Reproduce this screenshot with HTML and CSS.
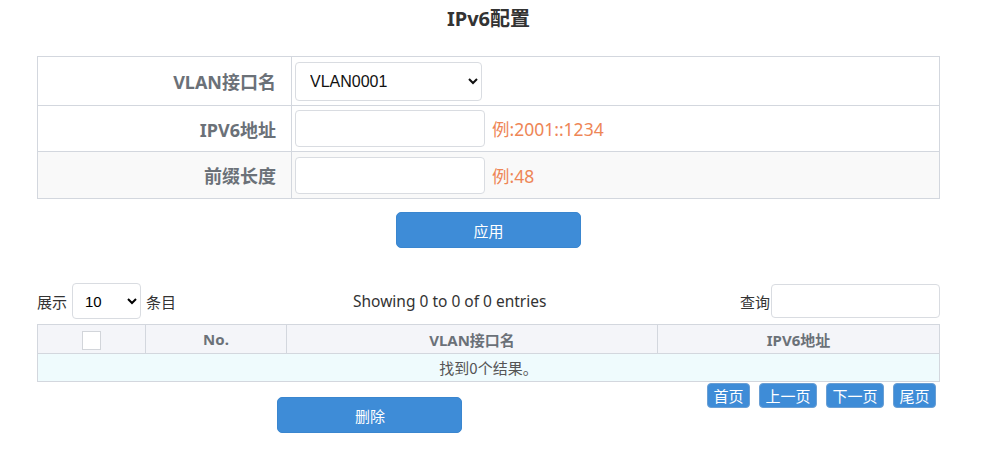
FILE: index.html
```html
<!DOCTYPE html>
<html>
<head>
  <meta charset="UTF-8">
  <title>IPv6配置</title>
  <link rel="stylesheet" href="styles.css">
</head>
<body>
  <div class="page">
    <h1>IPv6配置</h1>

    <table class="form-table">
      <tr class="row1">
        <td class="label">VLAN接口名</td>
        <td>
          <select class="vlan-select">
            <option>VLAN0001</option>
          </select>
        </td>
      </tr>
      <tr class="row2">
        <td class="label">IPV6地址</td>
        <td><input type="text" class="field"><span class="hint">例:2001::1234</span></td>
      </tr>
      <tr class="row3 alt">
        <td class="label">前缀长度</td>
        <td><input type="text" class="field"><span class="hint">例:48</span></td>
      </tr>
    </table>

    <div class="apply-row">
      <button class="btn btn-wide">应用</button>
    </div>

    <div class="controls">
      <div class="length">
        展示
        <select class="len-select">
          <option>10</option>
        </select>
        条目
      </div>
      <div class="info">Showing 0 to 0 of 0 entries</div>
      <div class="search">查询<input type="text" class="search-input"></div>
    </div>

    <table class="data-table">
      <thead>
        <tr>
          <th class="c-check"><span class="checkbox"></span></th>
          <th class="c-no">No.</th>
          <th class="c-vlan">VLAN接口名</th>
          <th class="c-ip">IPV6地址</th>
        </tr>
      </thead>
      <tbody>
        <tr>
          <td colspan="4" class="empty">找到0个结果。</td>
        </tr>
      </tbody>
    </table>

    <div class="bottom">
      <div class="delete-wrap">
        <button class="btn btn-wide btn-del">删除</button>
      </div>
      <div class="pager">
        <button class="pg">首页</button>
        <button class="pg">上一页</button>
        <button class="pg">下一页</button>
        <button class="pg">尾页</button>
      </div>
    </div>
  </div>
</body>
</html>
```

FILE: styles.css
```css
body { margin: 0; font-family: "Noto Sans", "Noto Sans CJK SC", sans-serif; color: #333; background: #fff; }
.page { width: 903px; margin-left: 37px; }
h1 { margin: 0; height: 56px; padding-top: 5px; box-sizing: border-box; text-align: center; font-size: 20px; font-weight: bold; color: #333; line-height: 28px; }

.form-table { width: 903px; border-collapse: collapse; border: 1px solid #d3d7de; }
.form-table td { border: 1px solid #d3d7de; padding: 0 0 0 3px; vertical-align: middle; }
.form-table td.label { width: 238px; padding: 0 15px 0 0; text-align: right; font-weight: bold; font-size: 18px; color: #6b7178; }
.form-table .row1 { height: 49px; }
.form-table .row2 { height: 46px; }
.form-table .row3 { height: 47px; }
.form-table .alt td { background: #f9f9f9; }

.vlan-select { width: 187px; height: 39px; padding: 0 10px; font-size: 16px; font-family: "Liberation Sans", sans-serif; color: #111; border: 1px solid #d9dce1; border-radius: 4px; background: #fff; }
.field { width: 190px; height: 37px; box-sizing: border-box; border: 1px solid #d9dce1; border-radius: 4px; vertical-align: middle; }
.hint { margin-left: 7px; font-size: 17.5px; color: #ee8656; vertical-align: middle; }

.apply-row { display: flex; justify-content: center; padding-top: 13px; height: 83px; box-sizing: border-box; }
.btn { background: #3e8cd7; color: #fff; border: 1px solid #3a86cf; border-radius: 5px; font-family: "Noto Sans CJK SC", sans-serif; font-size: 15px; cursor: pointer; }
.btn-wide { width: 185px; height: 36px; }

.controls { display: flex; align-items: flex-start; height: 42px; padding-top: 1px; box-sizing: border-box; font-size: 15px; }
.controls > div { height: 36px; display: flex; align-items: center; }
.length { gap: 5px; width: 262px; font-family: "Noto Sans CJK SC", sans-serif; }
.len-select { width: 69px; height: 36px; padding: 0 8px; font-size: 15px; border: 1px solid #d9dce1; border-radius: 4px; background: #fff; }
.info { flex: 1; color: #333; font-size: 15.5px; padding-left: 54px; }
.search { font-family: "Noto Sans CJK SC", sans-serif; }
.search-input { width: 169px; height: 34px; box-sizing: border-box; border: 1px solid #d9dce1; border-radius: 4px; margin-left: 1px; }

.data-table { width: 903px; border-collapse: collapse; border: 1px solid #d3d7de; font-size: 15px; }
.data-table th { height: 28px; background: #f4f5f9; border: 1px solid #d3d7de; font-weight: bold; color: #6b7178; text-align: center; padding: 0; font-size: 15px; }
.c-check { width: 107px; }
.c-no { width: 140px; }
.c-vlan { width: 370px; }
.checkbox { display: inline-block; width: 17px; height: 17px; border: 1px solid #d2d5da; background: #fff; vertical-align: middle; }
.empty { height: 27px; background: #effbfd; text-align: center; color: #555; padding: 0; font-family: "Noto Sans CJK SC", sans-serif; }

.bottom { display: flex; align-items: flex-start; }
.delete-wrap { flex: 1; display: flex; justify-content: center; padding: 15px 4px 0 0; }
.pager { display: flex; gap: 9px; padding: 1px 4px 0 0; }
.pg { height: 25px; padding: 0 5.5px; background: #3e8cd7; color: #fff; border: 1px solid #6a9fd4; border-radius: 4px; font-family: "Noto Sans CJK SC", sans-serif; font-size: 15px; line-height: 22px; cursor: pointer; }
```
